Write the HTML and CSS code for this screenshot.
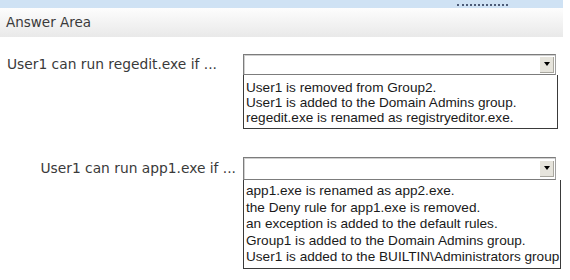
FILE: index.html
```html
<!DOCTYPE html>
<html>

<head>
    <title>Answer Area</title>
    <link rel="stylesheet" href="styles.css">
</head>

<body>
    <div class="page">
        <div class="topbar">
            <span class="dots"></span>
        </div>
        <div class="header">Answer Area</div>

        <div class="rows">
            <div class="row">
                <div class="label">User1 can run regedit.exe if ...</div>
                <div class="field">
                    <div class="combo">
                        <span class="combo-btn"><span class="arrow"></span></span>
                    </div>
                    <div class="list">
                        <div>User1 is removed from Group2.</div>
                        <div>User1 is added to the Domain Admins group.</div>
                        <div>regedit.exe is renamed as registryeditor.exe.</div>
                    </div>
                </div>
            </div>

            <div class="row row-second">
                <div class="label label-right">User1 can run app1.exe if ...</div>
                <div class="field">
                    <div class="combo">
                        <span class="combo-btn"><span class="arrow"></span></span>
                    </div>
                    <div class="list list-wide">
                        <div>app1.exe is renamed as app2.exe.</div>
                        <div>the Deny rule for app1.exe is removed.</div>
                        <div>an exception is added to the default rules.</div>
                        <div>Group1 is added to the Domain Admins group.</div>
                        <div>User1 is added to the BUILTIN\Administrators group</div>
                    </div>
                </div>
            </div>
        </div>
    </div>
</body>

</html>
```

FILE: styles.css
```css
/* General Styles */
body {
    margin: 0;
    background-color: #fff;
}

.page {
    width: 570px;
    height: 280px;
    overflow: hidden;
}

/* Top strip */
.topbar {
    width: 563px;
    height: 8px;
    background-color: #cfe2f4;
    display: flex;
    justify-content: flex-end;
    box-sizing: border-box;
    padding-top: 4px;
    padding-right: 55px;
}

.dots {
    width: 51px;
    height: 0;
    border-top: 2px dotted #4d5c78;
}

/* Header */
.header {
    width: 563px;
    height: 29px;
    line-height: 29px;
    padding-left: 6px;
    box-sizing: border-box;
    font-family: "DejaVu Sans", Verdana, sans-serif;
    font-size: 13.5px;
    color: #3a3a3a;
    background: linear-gradient(#fdfdfd, #e9e9e9);
}

/* Question rows */
.rows {
    padding-top: 17px;
}

.row {
    display: flex;
    align-items: flex-start;
}

.row-second {
    margin-top: 28px;
}

.label {
    width: 236px;
    padding-left: 7px;
    height: 21px;
    line-height: 21px;
    font-family: "DejaVu Sans", Verdana, sans-serif;
    font-size: 13.8px;
    color: #3a3a3a;
    white-space: nowrap;
}

.label-right {
    text-align: right;
    padding-left: 0;
    padding-right: 7px;
    width: 236px;
    height: 22px;
    line-height: 22px;
}

.field {
    display: flex;
    flex-direction: column;
}

/* Combo box */
.combo {
    width: 313px;
    height: 21px;
    box-sizing: border-box;
    border: 1px solid #7c7c7c;
    border-right-color: #a0a0a0;
    box-shadow: inset 1px 1px 0 #d0d0d0;
    background-color: #fff;
    display: flex;
    justify-content: flex-end;
    align-items: center;
    padding-right: 1px;
}

.row-second .combo {
    height: 23px;
}

.combo-btn {
    width: 13px;
    height: 15px;
    background-color: #e6e4dc;
    border-right: 1px solid #a9a79f;
    border-bottom: 1px solid #a9a79f;
    display: flex;
    justify-content: center;
    align-items: center;
}

.arrow {
    width: 0;
    height: 0;
    border-left: 3px solid transparent;
    border-right: 3px solid transparent;
    border-top: 4px solid #000;
}

/* Option lists */
.list {
    width: 315px;
    box-sizing: border-box;
    border: 1px solid #3a3a3a;
    border-top: none;
    padding: 5px 0 3px 2px;
    font-family: "Liberation Sans", Tahoma, Arial, sans-serif;
    font-size: 13.6px;
    line-height: 15px;
    color: #1a1a1a;
    white-space: nowrap;
}

.list-wide {
    width: 318px;
    padding: 3px 0 2px 2px;
    line-height: 16.5px;
    overflow: hidden;
}
```
